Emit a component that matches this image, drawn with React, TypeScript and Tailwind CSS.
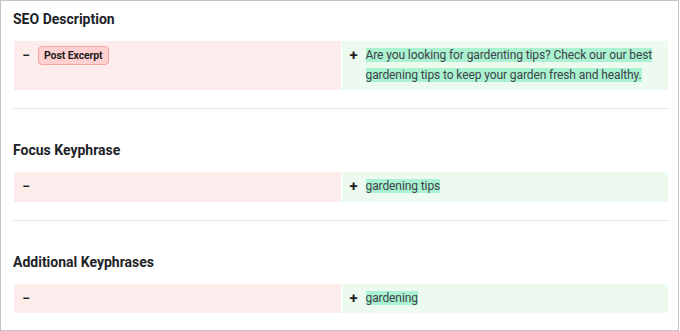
import React from "react";

type Row = {
  title: string;
  removed?: React.ReactNode;
  added: string;
};

const ROWS: Row[] = [
  {
    title: "SEO Description",
    removed: (
      <span className="inline-block rounded-[4px] border border-[#f4a3a3] bg-[#ffd0d0] px-[5px] text-[10.5px] font-bold leading-[17px] text-[#1e1e1e]">
        Post Excerpt
      </span>
    ),
    added:
      "Are you looking for gardenting tips? Check our our best gardening tips to keep your garden fresh and healthy.",
  },
  { title: "Focus Keyphrase", added: "gardening tips" },
  { title: "Additional Keyphrases", added: "gardening" },
];

function DiffRow({ row }: { row: Row }) {
  return (
    <div className="mx-px grid grid-cols-2 gap-px text-[12px] leading-[19.5px] tracking-[-0.1px] text-[#3c434a]">
      <div className="flex gap-2 bg-[#fcecec] px-2 py-[5px]">
        <span className="w-2 shrink-0 text-center text-[14px] font-semibold text-[#1e1e1e]">−</span>
        <div>{row.removed}</div>
      </div>
      <div className="flex gap-2 bg-[#edfaef] px-2 py-[5px]">
        <span className="w-2 shrink-0 text-center text-[15px] font-bold text-[#1e1e1e]">+</span>
        <div>
          <span className="bg-[#abf2d0] [box-decoration-break:clone]">{row.added}</span>
        </div>
      </div>
    </div>
  );
}

export default function App() {
  return (
    <div className="h-[331px] w-[680px] bg-white">
      <div
        className="h-[331px] w-[679px] border border-[#c3c4c7] pl-3 pr-[9px] pt-2"
        style={{ fontFamily: "Roboto, 'Noto Sans', sans-serif" }}
      >
        {ROWS.map((row, i) => (
          <section key={row.title} className={i > 0 ? "pt-[31px]" : ""}>
            <h2 className="text-[14px] font-bold leading-[20px] text-[#1d2327]">{row.title}</h2>
            <div className="mt-3">
              <DiffRow row={row} />
            </div>
            {i < ROWS.length - 1 && <div className="mt-[18px] h-px bg-[#e2e4e7]" />}
          </section>
        ))}
      </div>
    </div>
  );
}
